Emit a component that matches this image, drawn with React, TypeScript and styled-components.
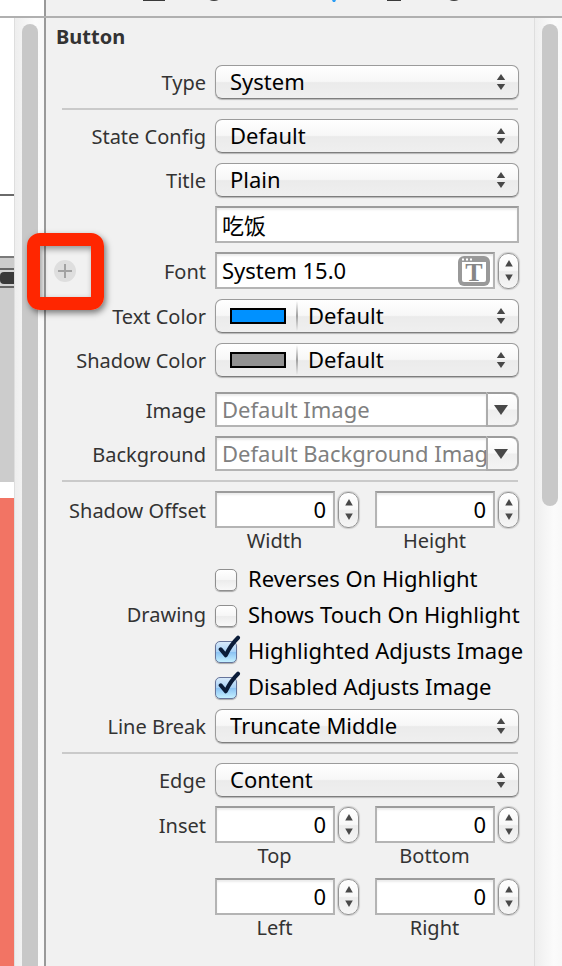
import React, { useId, useState } from "react";
import styled, { createGlobalStyle, css } from "styled-components";

const GlobalStyle = createGlobalStyle`
  *, *::before, *::after { box-sizing: border-box; }
  body {
    margin: 0;
    background: #f1f1f1;
    color: #000;
    font-family: "Noto Sans", "Noto Sans CJK SC", sans-serif;
  }
  button, input, select { font: inherit; color: inherit; margin: 0; }
`;

/* ---------- Window frame ---------- */

const Window = styled.div`
  display: flex;
  flex-direction: column;
  min-height: 100vh;
`;

const TopBar = styled.header`
  display: flex;
  height: 18px;
  border-bottom: 2px solid #b0b0b0;
`;

const EditorHeader = styled.div`
  flex: none;
  width: 46px;
  background: #fff;
  border-right: 2px solid #999;
`;

const Tabs = styled.nav`
  flex: 1;
  display: flex;
  justify-content: center;
`;

const Tab = styled.button`
  width: 60px;
  height: 16px;
  padding: 0;
  border: 0;
  background: none;
  display: flex;
  justify-content: center;
  align-items: flex-start;
`;

const Body = styled.div`
  flex: 1;
  display: flex;
`;

/* ---------- Canvas seen at the left edge ---------- */

const Canvas = styled.div`
  flex: none;
  width: 14px;
  display: flex;
  flex-direction: column;
  background: #fff;
`;

const Scene = styled.div<{ $height: number; $line?: string }>`
  height: ${(p) => p.$height}px;
  border-bottom: ${(p) => (p.$line ? `2px solid ${p.$line}` : "0")};
`;

const Dock = styled.div`
  height: 224px;
  padding-top: 10px;
  background: #ccc;
`;

const DockBar = styled.div`
  height: 20px;
  padding: 2px 0;
  border: solid #666;
  border-width: 2px 0;
  background: #d4d4d4;
`;

const DockHandle = styled.div`
  height: 12px;
  border-radius: 4px 0 0 4px;
  background: #3a3a3a;
`;

const ColorView = styled.div`
  flex: 1;
  margin-top: 16px;
  background: #f27464;
`;

/* ---------- Scroll bars ---------- */

const Track = styled.div<{ $side: "left" | "right" }>`
  flex: none;
  display: flex;
  flex-direction: column;
  width: ${(p) => (p.$side === "left" ? 32 : 28)}px;
  padding: 6px ${(p) => (p.$side === "left" ? 6 : 4)}px 0 7px;
  border-left: 1px solid #dedede;
  border-right: ${(p) => (p.$side === "left" ? "2px solid #999" : "0")};
  background: linear-gradient(to right, #eee, #fbfbfb 70%, #f8f8f8);
`;

const Thumb = styled.div<{ $full?: boolean }>`
  ${(p) =>
    p.$full
      ? css`
          flex: 1;
          border-radius: 8px 8px 0 0;
        `
      : css`
          height: 482px;
          border-radius: 8px;
        `}
  background: #c8c8c8;
`;

/* ---------- Inspector ---------- */

const Inspector = styled.main`
  flex: 1;
  min-width: 0;
  padding: 6px 15px 20px 8px;
  background: #f1f1f1;
`;

const Heading = styled.h1`
  margin: 0 0 15px;
  padding-left: 2px;
  font-size: 20px;
  line-height: 26px;
  font-weight: 700;
  color: #333;
`;

const Rule = styled.hr`
  height: 2px;
  margin: 9px 1px 9px 8px;
  border: 0;
  background: #cacaca;
`;

const Row = styled.div<{ $gap?: number; $height?: number }>`
  display: grid;
  grid-template-columns: 152px minmax(0, 1fr);
  column-gap: 9px;
  align-items: center;
  margin-top: ${(p) => p.$gap ?? 0}px;
  min-height: ${(p) => (p.$height ? `${p.$height}px` : "0")};
`;

const LabelCell = styled.div`
  display: flex;
  align-items: center;
  justify-content: flex-end;
`;

const Name = styled.label`
  margin-left: auto;
  padding-top: 2px;
  font-size: 20px;
  line-height: 26px;
  color: #333;
  white-space: nowrap;
`;

/* ---------- Pop-up buttons ---------- */

const PopupFrame = styled.div`
  position: relative;
  height: 34px;
`;

const PopupSelect = styled.select<{ $swatch?: boolean }>`
  appearance: none;
  width: 100%;
  height: 34px;
  padding: 0 36px 2px ${(p) => (p.$swatch ? 92 : 14)}px;
  border: 1px solid #9b9b9b;
  border-bottom-color: #7e7e7e;
  border-radius: 7px;
  background: linear-gradient(#fff, #f7f7f7 48%, #ebebeb 52%, #efefef);
  box-shadow: 0 1px 1px rgba(0, 0, 0, 0.25);
  font-size: 22px;
  line-height: 30px;
`;

const PopupArrows = styled.svg`
  position: absolute;
  right: 13px;
  top: 9px;
  pointer-events: none;
`;

const Swatch = styled.span<{ $color: string }>`
  position: absolute;
  left: 15px;
  top: 9px;
  width: 56px;
  height: 16px;
  border: 2px solid #000;
  background: ${(p) => p.$color};
  pointer-events: none;
`;

const SwatchDivider = styled.span`
  position: absolute;
  left: 81px;
  top: 2px;
  width: 2px;
  height: 30px;
  background: linear-gradient(transparent, #a0a0a0 50%, transparent);
  pointer-events: none;
`;

/* ---------- Text fields ---------- */

const fieldBox = css`
  width: 100%;
  border: 2px solid #b4b4b4;
  border-top-color: #9c9c9c;
  border-radius: 0;
  background: #fff;
  box-shadow: inset 0 2px 2px rgba(0, 0, 0, 0.08);
  outline: none;
  font-size: 22px;
  line-height: 30px;
`;

const Field = styled.input<{ $numeric?: boolean }>`
  ${fieldBox}
  height: 37px;
  min-width: 0;
  padding: 0 ${(p) => (p.$numeric ? 7 : 5)}px 2px 5px;
  text-align: ${(p) => (p.$numeric ? "right" : "left")};
`;

const FieldFrame = styled.div`
  position: relative;
  flex: 1;
  min-width: 0;
  display: flex;
`;

const FontPicker = styled.button`
  position: absolute;
  right: 5px;
  top: 4px;
  display: flex;
  padding: 0;
  border: 0;
  background: none;
`;

const WithStepper = styled.div`
  display: flex;
  gap: 3px;
`;

const StepperBox = styled.div`
  flex: none;
  display: flex;
  flex-direction: column;
  width: 21px;
  height: 36px;
  margin-top: 1px;
  border: 1px solid #949494;
  border-radius: 10px;
  background: linear-gradient(#fff, #f8f8f8 48%, #ececec 52%, #f6f6f6);
  box-shadow: 0 0 1px 1px rgba(0, 0, 0, 0.15);
`;

const StepButton = styled.button<{ $up?: boolean }>`
  flex: 1;
  display: flex;
  align-items: ${(p) => (p.$up ? "flex-start" : "flex-end")};
  justify-content: center;
  padding: ${(p) => (p.$up ? "6px 0 0" : "0 0 7px")};
  border: 0;
  background: none;
`;

const Pair = styled.div`
  display: grid;
  grid-template-columns: 1fr 1fr;
  column-gap: 16px;
`;

const Caption = styled.label`
  display: block;
  margin-right: 25px;
  font-size: 20px;
  line-height: 26px;
  text-align: center;
  color: #333;
`;

const PairLabelCell = styled(LabelCell)`
  align-self: start;
  height: 38px;
`;

/* ---------- Combo boxes ---------- */

const Combo = styled.div`
  display: flex;
  height: 35px;
`;

const ComboInput = styled.input`
  ${fieldBox}
  flex: 1;
  min-width: 0;
  height: 35px;
  border-right: 0;
  padding: 0 0 2px 5px;
  &::placeholder { color: #808080; opacity: 1; }
`;

const ComboButton = styled.button`
  flex: none;
  width: 33px;
  height: 35px;
  display: flex;
  align-items: center;
  justify-content: center;
  padding: 0 3px 0 0;
  border: 2px solid #acacac;
  border-top-color: #9c9c9c;
  border-radius: 0 8px 8px 0;
  background: linear-gradient(#fff, #f9f9f9 48%, #eee 52%, #f4f4f4);
`;

/* ---------- Check boxes ---------- */

const CheckLabel = styled.label`
  display: flex;
  align-items: flex-start;
  gap: 11px;
  font-size: 22px;
  line-height: 30px;
  white-space: nowrap;
`;

const CheckFrame = styled.span`
  position: relative;
  flex: none;
  width: 22px;
  height: 22px;
  margin-top: 6px;
`;

const CheckInput = styled.input`
  appearance: none;
  display: block;
  width: 22px;
  height: 22px;
  border: 1px solid #8f8f8f;
  border-radius: 5px;
  background: linear-gradient(#fff, #f6f6f6 48%, #ececec 52%, #f8f8f8);
  box-shadow: 0 1px 1px rgba(0, 0, 0, 0.3);
  &:checked {
    border-color: #66749a;
    background: linear-gradient(#d8eafa, #a9d2f6 48%, #8cc3f3 52%, #c4f0ff);
  }
`;

const CheckMark = styled.svg`
  position: absolute;
  left: 0;
  top: -6px;
  pointer-events: none;
`;

/* ---------- Add button and its red marker ---------- */

const AddSpot = styled.div`
  position: relative;
  display: flex;
`;

const AddButton = styled.button`
  display: flex;
  width: 22px;
  height: 22px;
  padding: 0;
  border: 0;
  border-radius: 50%;
  background: #dedede;
`;

const Marker = styled.div`
  position: absolute;
  left: -27px;
  top: -27px;
  width: 77px;
  height: 77px;
  border: 13px solid #ff2600;
  border-radius: 13px;
  box-shadow: 2px 3px 6px rgba(0, 0, 0, 0.5), inset 2px 3px 6px rgba(0, 0, 0, 0.4);
  pointer-events: none;
`;

/* ---------- Parts ---------- */

function Popup({ label, value, swatch }: { label: string; value: string; swatch?: string }) {
  const id = useId();
  return (
    <>
      <LabelCell>
        <Name htmlFor={id}>{label}</Name>
      </LabelCell>
      <PopupFrame>
        <PopupSelect id={id} $swatch={!!swatch}>
          <option>{value}</option>
        </PopupSelect>
        {swatch && <Swatch $color={swatch} />}
        {swatch && <SwatchDivider />}
        <PopupArrows width="10" height="16" viewBox="0 0 10 16" fill="#484848">
          <path d="M5 0 9.2 6H.8z" />
          <path d="M.8 10h8.4L5 16z" />
        </PopupArrows>
      </PopupFrame>
    </>
  );
}

function Stepper({ name }: { name: string }) {
  return (
    <StepperBox>
      <StepButton type="button" $up aria-label={`Increase ${name}`}>
        <svg width="8" height="7" viewBox="0 0 8 7" fill="#484848">
          <path d="M4 0 7.8 6.5H.2z" />
        </svg>
      </StepButton>
      <StepButton type="button" aria-label={`Decrease ${name}`}>
        <svg width="8" height="7" viewBox="0 0 8 7" fill="#484848">
          <path d="M.2 .5h7.6L4 7z" />
        </svg>
      </StepButton>
    </StepperBox>
  );
}

function NumberField({ name }: { name: string }) {
  const id = useId();
  return (
    <div>
      <WithStepper>
        <Field id={id} $numeric inputMode="numeric" defaultValue="0" />
        <Stepper name={name} />
      </WithStepper>
      <Caption htmlFor={id}>{name}</Caption>
    </div>
  );
}

function ComboRow({ label, placeholder, gap }: { label: string; placeholder: string; gap: number }) {
  const id = useId();
  return (
    <Row $gap={gap}>
      <LabelCell>
        <Name htmlFor={id}>{label}</Name>
      </LabelCell>
      <Combo>
        <ComboInput id={id} placeholder={placeholder} />
        <ComboButton type="button" aria-label={`${label} choices`}>
          <svg width="14" height="10" viewBox="0 0 14 10" fill="#484848">
            <path d="M0 0h14L7 10z" />
          </svg>
        </ComboButton>
      </Combo>
    </Row>
  );
}

function CheckRow({ text, group, initial, gap }: { text: string; group?: string; initial?: boolean; gap?: number }) {
  const id = useId();
  const [on, setOn] = useState(!!initial);
  return (
    <Row $gap={gap} $height={36}>
      <LabelCell>{group && <Name as="span">{group}</Name>}</LabelCell>
      <CheckLabel htmlFor={id}>
        <CheckFrame>
          <CheckInput id={id} type="checkbox" checked={on} onChange={() => setOn(!on)} />
          {on && (
            <CheckMark width="28" height="26" viewBox="0 0 28 26">
              <path
                d="M5.7 14.3 10.7 20.3Q15.5 10 23 2.7"
                fill="none"
                stroke="#0b1c38"
                strokeWidth="4"
                strokeLinecap="round"
                strokeLinejoin="round"
              />
            </CheckMark>
          )}
        </CheckFrame>
        {text}
      </CheckLabel>
    </Row>
  );
}

const tabs = [
  { name: "File", icon: <path d="M-11-18H11V1H-11z" fill="#3a3a3a" /> },
  { name: "Quick Help", icon: <circle cy="-9" r="10" fill="#3a3a3a" /> },
  { name: "Identity", icon: <path d="M-12-18H12V0H-12z" fill="#f5f5f5" /> },
  { name: "Attributes", icon: <path d="M-5-5H5L2 0 1 2H-1L-2 0z" fill="#2a9df4" /> },
  { name: "Size", icon: <path d="M-7-18H7V1H-7z" fill="#3a3a3a" /> },
  { name: "Connections", icon: <circle cy="-9" r="10" fill="#3a3a3a" /> },
];

export default function App() {
  return (
    <>
      <GlobalStyle />
      <Window>
        <TopBar>
          <EditorHeader />
          <Tabs aria-label="Inspectors">
            {tabs.map((tab) => (
              <Tab key={tab.name} type="button" aria-label={tab.name}>
                <svg width="24" height="6" viewBox="-12 0 24 6">
                  {tab.icon}
                </svg>
              </Tab>
            ))}
          </Tabs>
        </TopBar>
        <Body>
          <Canvas>
            <Scene $height={178} $line="#6a6a6a" />
            <Scene $height={62} $line="#7a7a7a" />
            <Dock>
              <DockBar>
                <DockHandle />
              </DockBar>
            </Dock>
            <ColorView />
          </Canvas>
          <Track $side="left">
            <Thumb $full />
          </Track>
          <Inspector>
            <Heading>Button</Heading>
            <Row>
              <Popup label="Type" value="System" />
            </Row>
            <Rule />
            <Row>
              <Popup label="State Config" value="Default" />
            </Row>
            <Row $gap={10}>
              <Popup label="Title" value="Plain" />
            </Row>
            <Row $gap={9}>
              <LabelCell />
              <Field aria-label="Title text" defaultValue="吃饭" />
            </Row>
            <Row $gap={9}>
              <LabelCell>
                <AddSpot>
                  <AddButton type="button" aria-label="Add font variation">
                    <svg width="22" height="22" viewBox="0 0 22 22" stroke="#a2a2a2" strokeWidth="2">
                      <path d="M11 4v14M4 11h14" />
                    </svg>
                  </AddButton>
                  <Marker />
                </AddSpot>
                <Name htmlFor="font">Font</Name>
              </LabelCell>
              <WithStepper>
                <FieldFrame>
                  <Field id="font" defaultValue="System 15.0" />
                  <FontPicker type="button" aria-label="Choose font">
                    <svg width="32" height="30" viewBox="0 0 32 30">
                      <rect width="32" height="30" rx="6" fill="#999" />
                      <path d="M4 6h24v18a2 2 0 0 1-2 2H6a2 2 0 0 1-2-2z" fill="#fff" />
                      <path d="M4 2.5h2v2H4zM8 2.5h2v2H8zM12 2.5h2v2h-2z" fill="#fff" />
                      <text
                        x="16"
                        y="25"
                        textAnchor="middle"
                        fontFamily="Liberation Serif, serif"
                        fontWeight="700"
                        fontSize="26"
                        fill="#868686"
                      >
                        T
                      </text>
                    </svg>
                  </FontPicker>
                </FieldFrame>
                <Stepper name="font size" />
              </WithStepper>
            </Row>
            <Row $gap={10}>
              <Popup label="Text Color" value="Default" swatch="#0091ff" />
            </Row>
            <Row $gap={10}>
              <Popup label="Shadow Color" value="Default" swatch="#919191" />
            </Row>
            <ComboRow label="Image" placeholder="Default Image" gap={15} />
            <ComboRow label="Background" placeholder="Default Background Image" gap={9} />
            <Rule />
            <Row>
              <PairLabelCell>
                <Name as="span">Shadow Offset</Name>
              </PairLabelCell>
              <Pair>
                <NumberField name="Width" />
                <NumberField name="Height" />
              </Pair>
            </Row>
            <CheckRow text="Reverses On Highlight" gap={6} />
            <CheckRow text="Shows Touch On Highlight" group="Drawing" />
            <CheckRow text="Highlighted Adjusts Image" initial />
            <CheckRow text="Disabled Adjusts Image" initial />
            <Row $gap={5}>
              <Popup label="Line Break" value="Truncate Middle" />
            </Row>
            <Rule />
            <Row>
              <Popup label="Edge" value="Content" />
            </Row>
            <Row $gap={9}>
              <PairLabelCell>
                <Name as="span">Inset</Name>
              </PairLabelCell>
              <Pair>
                <NumberField name="Top" />
                <NumberField name="Bottom" />
              </Pair>
            </Row>
            <Row $gap={9}>
              <LabelCell />
              <Pair>
                <NumberField name="Left" />
                <NumberField name="Right" />
              </Pair>
            </Row>
          </Inspector>
          <Track $side="right">
            <Thumb />
          </Track>
        </Body>
      </Window>
    </>
  );
}
